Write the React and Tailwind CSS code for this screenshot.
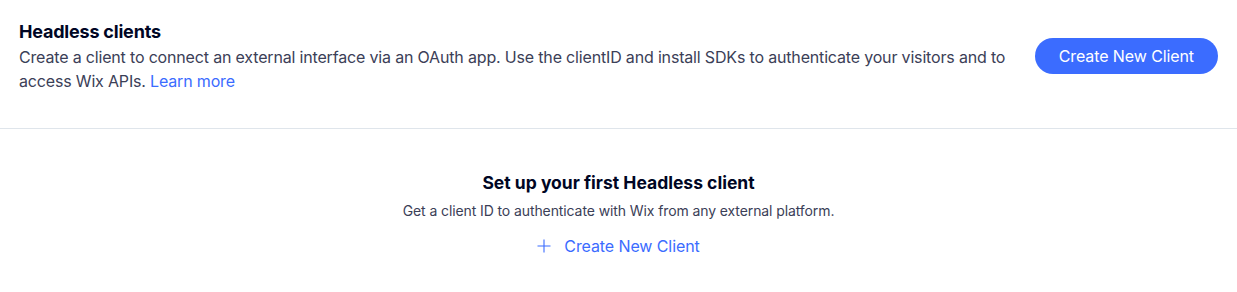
const font = { fontFamily: "Inter, 'Noto Sans', sans-serif" };

function App() {
  return (
    <main className="min-h-screen w-full bg-white" style={font}>
      <section className="flex items-start justify-between gap-6 border-b border-[#dfe5eb] px-[19px] pb-[35px] pt-[20px]">
        <div className="max-w-[1000px]">
          <h1 className="text-[18px] font-bold leading-[24px] tracking-[-0.2px] text-[#000624]">
            Headless clients
          </h1>
          <p className="mt-[1px] text-[16px] leading-[24px] tracking-[-0.17px] text-[#3b4057]">
            Create a client to connect an external interface via an OAuth app.
            Use the clientID and install SDKs to authenticate your visitors and to
            access Wix APIs.{" "}
            <a href="#" className="text-[#3b6cff]">
              Learn more
            </a>
          </p>
        </div>
        <button className="mt-[18px] h-[36px] shrink-0 rounded-full bg-[#3b6cff] px-[24px] text-[16px] leading-[24px] tracking-[-0.1px] text-white">
          Create New Client
        </button>
      </section>

      <section className="flex flex-col items-center pt-[42px]">
        <h2 className="text-[17.5px] font-bold leading-[24px] text-[#000624]">
          Set up your first Headless client
        </h2>
        <p className="mt-[7px] text-[14px] leading-[18px] tracking-[-0.1px] text-[#3b4057]">
          Get a client ID to authenticate with Wix from any external platform.
        </p>
        <button className="mt-[14px] flex items-center gap-[13px] text-[16px] leading-[24px] tracking-[-0.1px] text-[#3b6cff]">
          <svg width="14" height="14" viewBox="0 0 14 14" fill="none" stroke="currentColor" strokeWidth="1.1">
            <path d="M7 0.5v13M0.5 7h13" />
          </svg>
          Create New Client
        </button>
      </section>
    </main>
  );
}

export default App;
